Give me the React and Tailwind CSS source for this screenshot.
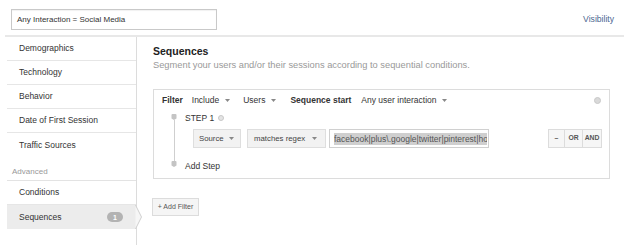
import React from 'react';

// small helpers
const Caret = ({ className = '' }) => (
  <svg width="5" height="3" viewBox="0 0 5 3" className={className}>
    <path d="M0 0 L5 0 L2.5 3 Z" fill="#888" />
  </svg>
);

const Marker = () => (
  <svg width="6" height="6" viewBox="0 0 6 6">
    <path d="M0.5 1 Q0.5 0 1.5 0 L4.5 0 Q5.5 0 5.5 1 L5.5 4.5 L3 6 L0.5 4.5 Z" fill="#c4c4c4" />
  </svg>
);

const navItems = ['Demographics', 'Technology', 'Behavior', 'Date of First Session', 'Traffic Sources'];

export default function App() {
  return (
    <div className="w-[624px] h-[247px] bg-white overflow-hidden font-['Liberation_Sans',Arial,sans-serif] text-[#333]">
      {/* HEADER */}
      <header className="h-[35px] flex items-start justify-between pl-[11px] pr-[10px] pt-[9px]">
        <div className="w-[206px] h-[21px] border border-[#c9c9c9] shadow-[inset_0_1px_1px_rgba(0,0,0,0.06)] flex items-center pl-[5px] text-[8px] text-[#333]">
          Any Interaction = Social Media
        </div>
        <span className="mt-[4px] text-[8.6px] text-[#4a6791]">Visibility</span>
      </header>

      <div className="ml-[5px] border-t-2 border-[#e8e8e8] flex h-[210px]">
        {/* SIDEBAR */}
        <aside className="ml-[2px] w-[130px] border-r border-[#dcdcdc] relative">
          {navItems.map((item, i) => (
            <div key={item} className={`h-[24px] flex items-center pl-[12px] text-[8.5px] ${i < navItems.length - 1 ? 'border-b border-[#e6e6e6]' : ''}`}>
              {item}
            </div>
          ))}
          <div className="h-[24px] flex items-end pb-[2px] pl-[5px] text-[8px] text-[#999] border-b border-[#e3e3e3]">Advanced</div>
          <div className="h-[24px] flex items-center pl-[12px] text-[8.5px] border-b border-[#e6e6e6]">Conditions</div>
          <div className="h-[24px] flex items-center justify-between pl-[12px] pr-[13px] text-[8.5px] bg-[#ececec] relative">
            <span>Sequences</span>
            <span className="w-[16px] h-[10px] rounded-full bg-[#b3b3b3] text-white text-[7px] font-bold flex items-center justify-center leading-none">1</span>
            <svg width="8" height="24" viewBox="0 0 8 24" className="absolute right-[-7px] top-0">
              <path d="M0.5 0 L6.5 12 L0.5 24 Z" fill="#f6f6f6" />
              <path d="M0.5 0 L6.5 12 L0.5 24" fill="none" stroke="#cfcfcf" strokeWidth="1" />
            </svg>
          </div>
        </aside>

        {/* MAIN */}
        <main className="flex-1 pl-[16px] pt-[8px]">
          <h2 className="text-[10.5px] font-bold leading-[13px] text-[#222]">Sequences</h2>
          <p className="mt-[2px] text-[9.3px] leading-[11px] text-[#999]">Segment your users and/or their sessions according to sequential conditions.</p>

          <div className="mt-[18px] w-[457px] border border-[#dcdcdc] pl-[8px] pr-[7px] pt-[5px] pb-[6px] relative">
            <span className="absolute right-[8px] top-[7px] w-[7px] h-[7px] rounded-full bg-[#d9d9d9] border border-[#c8c8c8]"></span>
            {/* filter row */}
            <div className="h-[11px] flex items-center text-[8.5px]">
              <span className="font-bold">Filter</span>
              <span className="ml-[9px]">Include</span>
              <Caret className="ml-[6px]" />
              <span className="ml-[13px]">Users</span>
              <Caret className="ml-[6px]" />
              <span className="ml-[14px] font-bold">Sequence start</span>
              <span className="ml-[10px]">Any user interaction</span>
              <Caret className="ml-[6px]" />
            </div>

            <div className="flex mt-[6px]">
              {/* timeline */}
              <div className="ml-[9px] w-[6px] flex flex-col items-center pt-[2px] pb-[5px]">
                <Marker />
                <div className="flex-1 w-px bg-[#cfcfcf]"></div>
                <Marker />
              </div>

              <div className="flex-1 ml-[8px]">
                <div className="h-[12px] flex items-center text-[8.5px]">
                  <span>STEP 1</span>
                  <span className="ml-[4px] w-[6px] h-[6px] rounded-full border border-[#c8c8c8] bg-[#e4e4e4]"></span>
                </div>

                <div className="mt-[5px] h-[19px] flex items-center">
                  <div className="ml-[8px] w-[48px] h-[19px] bg-[#f2f2f2] border border-[#dedede] flex items-center justify-between pl-[5px] pr-[6px] text-[7.8px] text-[#444]">
                    <span>Source</span>
                    <Caret />
                  </div>
                  <div className="ml-[6px] w-[79px] h-[19px] bg-[#f2f2f2] border border-[#dedede] flex items-center justify-between pl-[6px] pr-[8px] text-[7.8px] text-[#444]">
                    <span>matches regex</span>
                    <Caret />
                  </div>
                  <div className="ml-[3px] w-[160px] h-[19px] bg-white border border-[#d0d0d0] flex items-center pl-[4px] pr-[1px] overflow-hidden">
                    <span className="bg-[#cfcfcf] text-[#555] text-[8.5px] leading-[12px] whitespace-nowrap overflow-hidden">facebook|plus\.google|twitter|pinterest|ho</span>
                  </div>
                  <div className="ml-auto h-[19px] flex border border-[#dcdcdc] bg-[#f6f6f6] text-[6.8px] font-bold text-[#555]">
                    <span className="w-[16px] flex items-center justify-center border-r border-[#dcdcdc]">–</span>
                    <span className="w-[18px] flex items-center justify-center border-r border-[#dcdcdc]">OR</span>
                    <span className="w-[18px] flex items-center justify-center">AND</span>
                  </div>
                </div>

                <div className="mt-[12px] h-[12px] flex items-center text-[8.5px]">Add Step</div>
              </div>
            </div>
          </div>

          <button className="mt-[19px] ml-[-1px] w-[47px] h-[18px] bg-[#f5f5f5] border border-[#dcdcdc] text-[7px] text-[#555] flex items-center justify-center">
            + Add Filter
          </button>
        </main>
      </div>
    </div>
  );
}
